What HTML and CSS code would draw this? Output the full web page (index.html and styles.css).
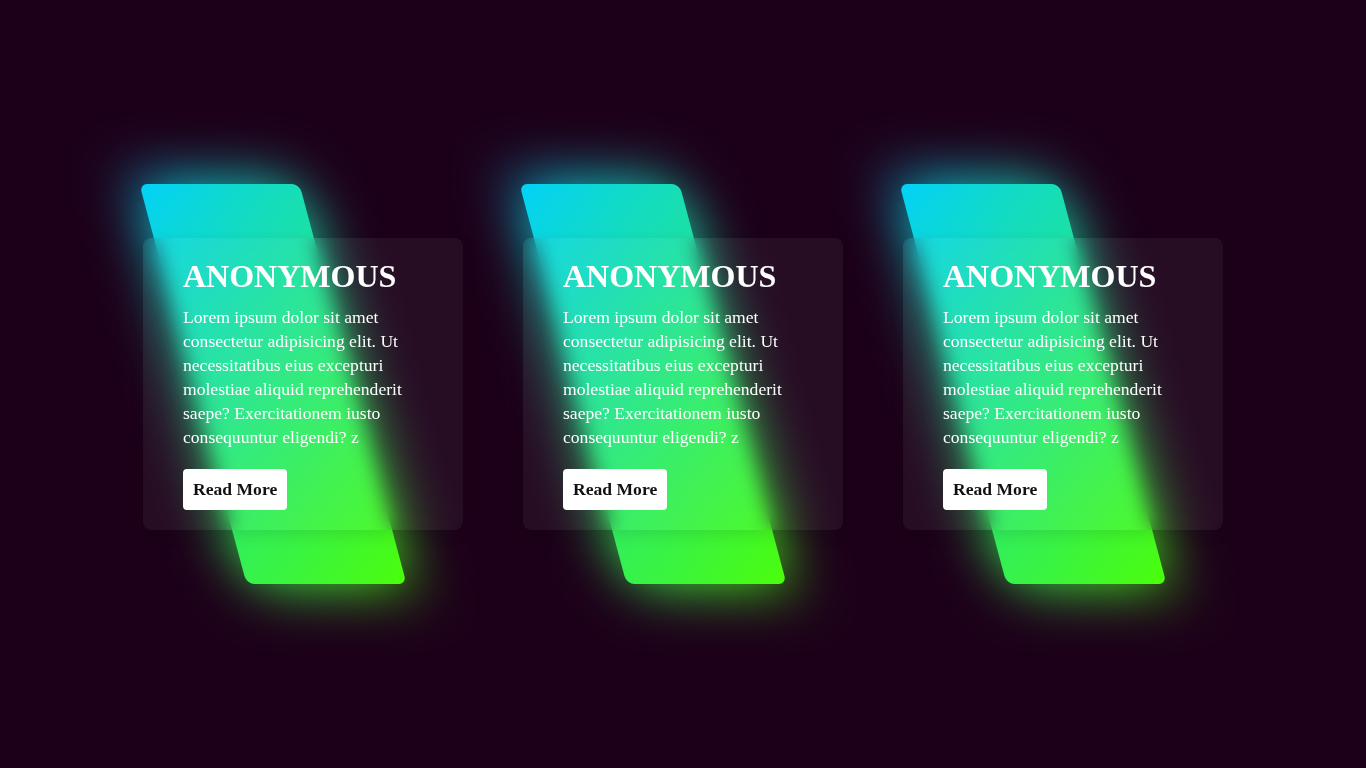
FILE: index.html
```html
<!DOCTYPE html>
<html lang="en">
<head>
<meta charset="UTF-8">
<title>Glass Cards</title>
<link rel="stylesheet" href="styles.css">
</head>
<body>
  <div class="container">
    <div class="box">
      <div class="content">
        <h2 class="title">ANONYMOUS</h2>
        <p class="text">Lorem ipsum dolor sit amet consectetur adipisicing elit. Ut necessitatibus eius excepturi molestiae aliquid reprehenderit saepe? Exercitationem iusto consequuntur eligendi? z</p>
        <a class="btn" href="#">Read More</a>
      </div>
    </div>
    <div class="box">
      <div class="content">
        <h2 class="title">ANONYMOUS</h2>
        <p class="text">Lorem ipsum dolor sit amet consectetur adipisicing elit. Ut necessitatibus eius excepturi molestiae aliquid reprehenderit saepe? Exercitationem iusto consequuntur eligendi? z</p>
        <a class="btn" href="#">Read More</a>
      </div>
    </div>
    <div class="box">
      <div class="content">
        <h2 class="title">ANONYMOUS</h2>
        <p class="text">Lorem ipsum dolor sit amet consectetur adipisicing elit. Ut necessitatibus eius excepturi molestiae aliquid reprehenderit saepe? Exercitationem iusto consequuntur eligendi? z</p>
        <a class="btn" href="#">Read More</a>
      </div>
    </div>
  </div>
</body>
</html>
```
FILE: styles.css
```css
* {
  margin: 0;
  padding: 0;
  box-sizing: border-box;
}

body {
  display: flex;
  justify-content: center;
  align-items: center;
  min-height: 100vh;
  background: #1c0019;
  font-family: "Liberation Serif", "Times New Roman", serif;
}

.container {
  display: flex;
  justify-content: center;
  align-items: center;
  flex-wrap: wrap;
  padding: 40px 0;
}

.box {
  position: relative;
  width: 320px;
  height: 400px;
  display: flex;
  justify-content: center;
  align-items: center;
  margin: 40px 30px;
}

.box::before,
.box::after {
  content: "";
  position: absolute;
  top: 0;
  left: 50px;
  width: 50%;
  height: 100%;
  background: linear-gradient(315deg, #4dff03, #00d0ff);
  border-radius: 8px;
  transform: skewX(15deg);
}

.box::after {
  filter: blur(30px);
}

.content {
  position: relative;
  left: 0;
  padding: 20px 40px;
  background: rgba(255, 255, 255, 0.05);
  backdrop-filter: blur(10px);
  box-shadow: 0 5px 15px rgba(0, 0, 0, 0.1);
  border-radius: 8px;
  z-index: 1;
  color: #fff;
}

.title {
  font-size: 2em;
  color: #fff;
  margin-bottom: 10px;
}

.text {
  font-size: 1.1em;
  margin-bottom: 15px;
  line-height: 24px;
}

.btn {
  display: inline-block;
  font-size: 1.1em;
  color: #111;
  background: #fff;
  padding: 10px;
  border-radius: 4px;
  text-decoration: none;
  font-weight: 700;
  margin-top: 5px;
}
```
